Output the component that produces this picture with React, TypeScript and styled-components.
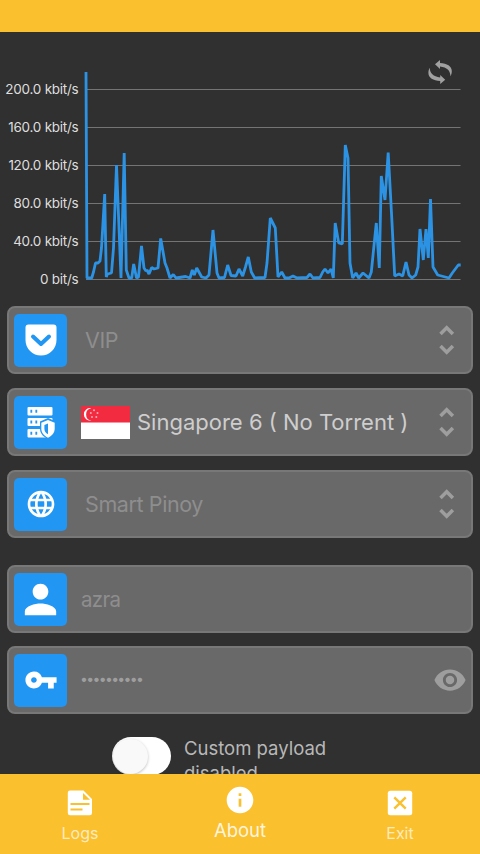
import type { ReactNode } from 'react';
import { MdInfo, MdLanguage, MdPerson, MdVisibility, MdVpnKey } from 'react-icons/md';
import styled, { createGlobalStyle } from 'styled-components';

const colors = {
    yellow: '#fbc02d',
    dark: '#303030',
    field: '#696969',
    border: '#787878',
    blue: '#2196f3',
    grey: '#9e9e9e',
};

const gridLines = [
    { y: 89, label: '200.0 kbit/s' },
    { y: 127, label: '160.0 kbit/s' },
    { y: 165, label: '120.0 kbit/s' },
    { y: 203, label: '80.0 kbit/s' },
    { y: 241, label: '40.0 kbit/s' },
    { y: 279, label: '0 bit/s' },
];

const traffic =
    '86,72 87,278 91.7,278 93.5,272 95.5,263 98,263 100,261 101.5,248 104.7,194 106.3,277 107.5,274 111.5,273 113.5,248 116.5,165 121,278 124.2,153 126.3,270 129,278 131.7,278 133.7,264 136.5,278 138.5,277 141.5,246 144,268 146,271 147,270 149,274 151.7,267.5 154,269 158,268 160.7,238.5 165,263 167,268 170,278 173.3,274.5 176,278 185.7,276.5 190,278 192.3,270 194.3,275 196.7,268 201.7,277 206,278 209,275 213,230 217,273 219,278 224.5,277.5 227.7,265 231,275.5 236,276 239,269 242.7,276 245.5,267 248.3,257 251.3,272 254.7,278 265,277.5 267,263 270.3,218 275.3,228 278,277 281.7,272 285,278 289,278 293,276 297,278 307,277.5 310,274 313,278 320,277.5 322.7,272 325,269 328,273 331,269 333.3,278 335.2,223 338.7,243 342.3,244 345.3,145 348,158 350,263 352.7,278 356,273 358.7,278 363,273 369,278 371.3,272 376.3,223 379.3,268 381.3,176 385,200 388.2,152.5 391.7,217 394.7,276 399,274 402.7,276 406,262 409,275 412,278 415.7,275 418,267 420,229 423.3,260 426,229 428.3,258 430.5,199 433,267 437.7,275 449,278 452.3,273 458.3,265 460.7,265';

const PocketIcon = () => (
    <svg width="32" height="32" viewBox="0 0 32 32">
        <path d="M3.5 .5h25a3 3 0 0 1 3 3V16a15.5 15.5 0 0 1-31 0V3.5a3 3 0 0 1 3-3Z" fill="#fff" />
        <path
            d="m8 12.5 8 7.5 8-7.5"
            fill="none"
            stroke={colors.blue}
            strokeWidth="4"
            strokeLinecap="round"
            strokeLinejoin="round"
        />
    </svg>
);

const ServerIcon = () => (
    <svg width="28" height="32" viewBox="0 0 28 32">
        <g fill="#fff">
            <rect x=".5" y="1" width="25" height="8.5" rx="1" />
            <rect x=".5" y="12" width="25" height="8" rx="1" />
            <rect x=".5" y="23" width="20" height="8.5" rx="1" />
        </g>
        <path
            d="M4.3 3.7v3M9.3 3.7v3M4.3 14.5v3M9.3 14.5v3M4.3 25.7v3M9.3 25.7v3"
            stroke={colors.blue}
            strokeWidth="1.8"
        />
        <path d="M13 15.5l8-3.5 8 3.5v7c0 5-3 8-8 10.5-5-2.5-8-5.5-8-10.5Z" fill={colors.blue} />
        <path d="M14.3 16.8l6.7-2.8 6.7 2.8v5.7c0 4.2-2.600 7.2-6.7 9.2-4.100-2-6.700-5-6.700-9.200Z" fill="#fff" />
        <path d="M21 17.5l-3.600 1.500v3.700c0 2.500 1.200 4.300 3.600 5.600Z" fill={colors.blue} />
    </svg>
);

const SingaporeFlag = () => (
    <svg width="49" height="33" viewBox="0 0 49 33">
        <path d="M0 0h49v33H0z" fill="#fff" />
        <path d="M0 0h49v16.5H0z" fill="#f22b41" />
        <path d="M10.3 2.2a6.300 6.300 0 1 0 0 12.400 6.300 6.300 0 0 1 0-12.400Z" fill="#fff" />
        <g fill="#fff" opacity=".6">
            <circle cx="13" cy="4.3" r="1" />
            <circle cx="9.8" cy="7" r="1" />
            <circle cx="16.5" cy="7" r="1" />
            <circle cx="11" cy="11" r="1" />
            <circle cx="15.3" cy="11" r="1" />
        </g>
    </svg>
);

const UpDownIcon = () => (
    <svg width="18" height="32" viewBox="0 0 18 32">
        <path
            d="m1.5 10 6.200-6.200L13.900 10M1.500 22l6.200 6.200 6.200-6.200"
            fill="none"
            stroke={colors.grey}
            strokeWidth="3.5"
        />
    </svg>
);

const refreshArrow = 'M8 6.3 13 2v3c7 .2 11.800 3.300 11.800 8 0 2-.4 3.600-1.300 5.200C23.300 12.800 20 9.300 13 8.600v2.500Z';

const RefreshIcon = () => (
    <svg width="26" height="28" viewBox="0 0 26 28" fill="#a0a0a0">
        <path d={refreshArrow} />
        <path d={refreshArrow} transform="rotate(180 13.100 14)" />
    </svg>
);

const LogsIcon = () => (
    <svg width="26" height="26" viewBox="0 0 26 26">
        <path d="M3 .5h13.5l8.5 8.5V23a2.200 2.200 0 0 1-2.200 2.200H3A2.200 2.200 0 0 1 .8 23V2.700A2.200 2.200 0 0 1 3 .5Z" fill="#fff" />
        <path d="M16 3v6.800h7" fill={colors.yellow} />
        <path d="M3.5 14h19M3.5 19.5h12" stroke={colors.yellow} strokeWidth="2" />
    </svg>
);

const ExitIcon = () => (
    <svg width="26" height="26" viewBox="0 0 26 26">
        <rect x=".8" y=".8" width="24.4" height="24.4" rx="2.5" fill="#fff" />
        <path d="m7.300 7.300 11.400 11.400M18.700 7.300 7.300 18.700" stroke={colors.yellow} strokeWidth="2.4" />
    </svg>
);

const TrafficChart = () => (
    <ChartArea>
        <svg width="480" height="274" viewBox="0 32 480 274">
            {gridLines.map(({ y, label }) => (
                <g key={label}>
                    <line x1="86" x2="460.5" y1={y + 0.5} y2={y + 0.5} stroke="#747474" />
                    <ChartLabel x="78.5" y={y + 5}>
                        {label}
                    </ChartLabel>
                </g>
            ))}
            <polyline points={traffic} fill="none" stroke="#2c93e4" strokeWidth="2.8" strokeLinejoin="bevel" />
        </svg>
        <RefreshButton aria-label="Refresh">
            <RefreshIcon />
        </RefreshButton>
    </ChartArea>
);

type FieldProps = {
    icon: ReactNode;
    action?: ReactNode;
    children: ReactNode;
};

const Field = ({ icon, action, children }: FieldProps) => (
    <FieldBox>
        <IconTile>{icon}</IconTile>
        {children}
        {action && <FieldAction>{action}</FieldAction>}
    </FieldBox>
);

const App = () => {
    return (
        <Screen>
            <GlobalStyle />
            <StatusBar />
            <Main>
                <TrafficChart />
                <FieldGroup $gap={14}>
                    <Field icon={<PocketIcon />} action={<UpDownIcon />}>
                        <FieldText>VIP</FieldText>
                    </Field>
                    <Field icon={<ServerIcon />} action={<UpDownIcon />}>
                        <Server>
                            <SingaporeFlag />
                            Singapore 6 ( No Torrent )
                        </Server>
                    </Field>
                    <Field icon={<MdLanguage size={32} />} action={<UpDownIcon />}>
                        <FieldText>Smart Pinoy</FieldText>
                    </Field>
                </FieldGroup>
                <FieldGroup $gap={13}>
                    <Field icon={<MdPerson size={47} />}>
                        <Username>azra</Username>
                    </Field>
                    <Field icon={<MdVpnKey size={34} />} action={<EyeIcon size={34} />}>
                        <Password>••••••••••</Password>
                    </Field>
                </FieldGroup>
                <PayloadRow>
                    <Switch role="switch" aria-checked={false} aria-label="Custom payload" />
                    <PayloadText>Custom payload disabled</PayloadText>
                </PayloadRow>
            </Main>
            <BottomNav>
                <NavItem>
                    <LogsIcon />
                    <NavLabel>Logs</NavLabel>
                </NavItem>
                <NavItem $active>
                    <MdInfo size={32} />
                    <NavLabel $active>About</NavLabel>
                </NavItem>
                <NavItem>
                    <ExitIcon />
                    <NavLabel>Exit</NavLabel>
                </NavItem>
            </BottomNav>
        </Screen>
    );
};

const GlobalStyle = createGlobalStyle`
    * {
        box-sizing: border-box;
    }

    body {
        margin: 0;
        background: ${colors.dark};
        font-family: Inter, 'Liberation Sans', sans-serif;
    }

    svg {
        display: block;
        flex-shrink: 0;
    }

    button {
        border: none;
        background: none;
        padding: 0;
        font: inherit;
    }
`;

const Screen = styled.div`
    display: flex;
    flex-direction: column;
    width: 480px;
    height: 854px;
    overflow: hidden;
    background: ${colors.dark};
`;

const StatusBar = styled.div`
    height: 32px;
    flex-shrink: 0;
    background: ${colors.yellow};
`;

const Main = styled.main`
    flex: 1;
    min-height: 0;
    overflow: hidden;
`;

const ChartArea = styled.section`
    position: relative;
    height: 274px;
`;

const ChartLabel = styled.text`
    fill: #dedede;
    font-size: 13.5px;
    letter-spacing: -0.25px;
    text-anchor: end;
`;

const RefreshButton = styled.button`
    position: absolute;
    top: 26px;
    right: 27px;
`;

const EyeIcon = styled(MdVisibility)`
    margin-right: -4px;
`;

const FieldGroup = styled.div<{ $gap: number }>`
    display: flex;
    flex-direction: column;
    gap: ${({ $gap }) => $gap}px;
    padding: 0 7px;

    & + & {
        margin-top: 27px;
    }
`;

const FieldBox = styled.div`
    display: flex;
    align-items: center;
    height: 68px;
    padding-left: 5px;
    border: 2px solid ${colors.border};
    border-radius: 8px;
    background: ${colors.field};
`;

const IconTile = styled.div`
    display: flex;
    align-items: center;
    justify-content: center;
    width: 53px;
    height: 53px;
    flex-shrink: 0;
    border-radius: 5px;
    color: #fff;
    background: ${colors.blue};
`;

const FieldText = styled.span`
    margin-left: 18px;
    color: #8e8e8e;
    font-size: 21.5px;
    letter-spacing: -0.4px;
`;

const Username = styled(FieldText)`
    margin-left: 14px;
    font-size: 20.5px;
    letter-spacing: -0.7px;
`;

const Server = styled.div`
    display: flex;
    align-items: center;
    gap: 7px;
    margin-left: 14px;
    color: #cecece;
    font-size: 22px;
    white-space: nowrap;
`;

const Password = styled(FieldText)`
    margin-left: 13px;
    padding-bottom: 3px;
    color: ${colors.grey};
    font-size: 14px;
    letter-spacing: -1.65px;
`;

const FieldAction = styled.button`
    display: flex;
    justify-content: center;
    width: 34px;
    flex-shrink: 0;
    margin-left: auto;
    margin-right: 6px;
    color: ${colors.grey};
`;

const PayloadRow = styled.div`
    display: flex;
    align-items: flex-start;
    gap: 13px;
    padding: 22px 0 0 112px;
`;

const Switch = styled.button`
    width: 59px;
    height: 38px;
    margin-top: 1px;
    flex-shrink: 0;
    border-radius: 19px;
    background: #fff;

    &::before {
        content: '';
        display: block;
        width: 35px;
        height: 35px;
        margin-left: 1px;
        border-radius: 50%;
        background: #f9f9f9;
        box-shadow: 0 1px 3px rgba(0, 0, 0, 0.25);
    }
`;

const PayloadText = styled.span`
    width: 160px;
    color: #b8b8b8;
    font-size: 18.5px;
    line-height: 25px;
`;

const BottomNav = styled.nav`
    display: flex;
    height: 80.5px;
    flex-shrink: 0;
    background: ${colors.yellow};
`;

const NavItem = styled.button<{ $active?: boolean }>`
    display: flex;
    flex: 1;
    flex-direction: column;
    align-items: center;
    gap: ${({ $active }) => ($active ? 4 : 7)}px;
    padding-top: ${({ $active }) => ($active ? 10.5 : 16.5)}px;
    color: #fff;
`;

const NavLabel = styled.span<{ $active?: boolean }>`
    color: ${({ $active }) => ($active ? 'rgba(255, 255, 255, 0.85)' : 'rgba(255, 255, 255, 0.7)')};
    font-size: ${({ $active }) => ($active ? 18.5 : 16)}px;
    line-height: 20px;
`;

export default App;
